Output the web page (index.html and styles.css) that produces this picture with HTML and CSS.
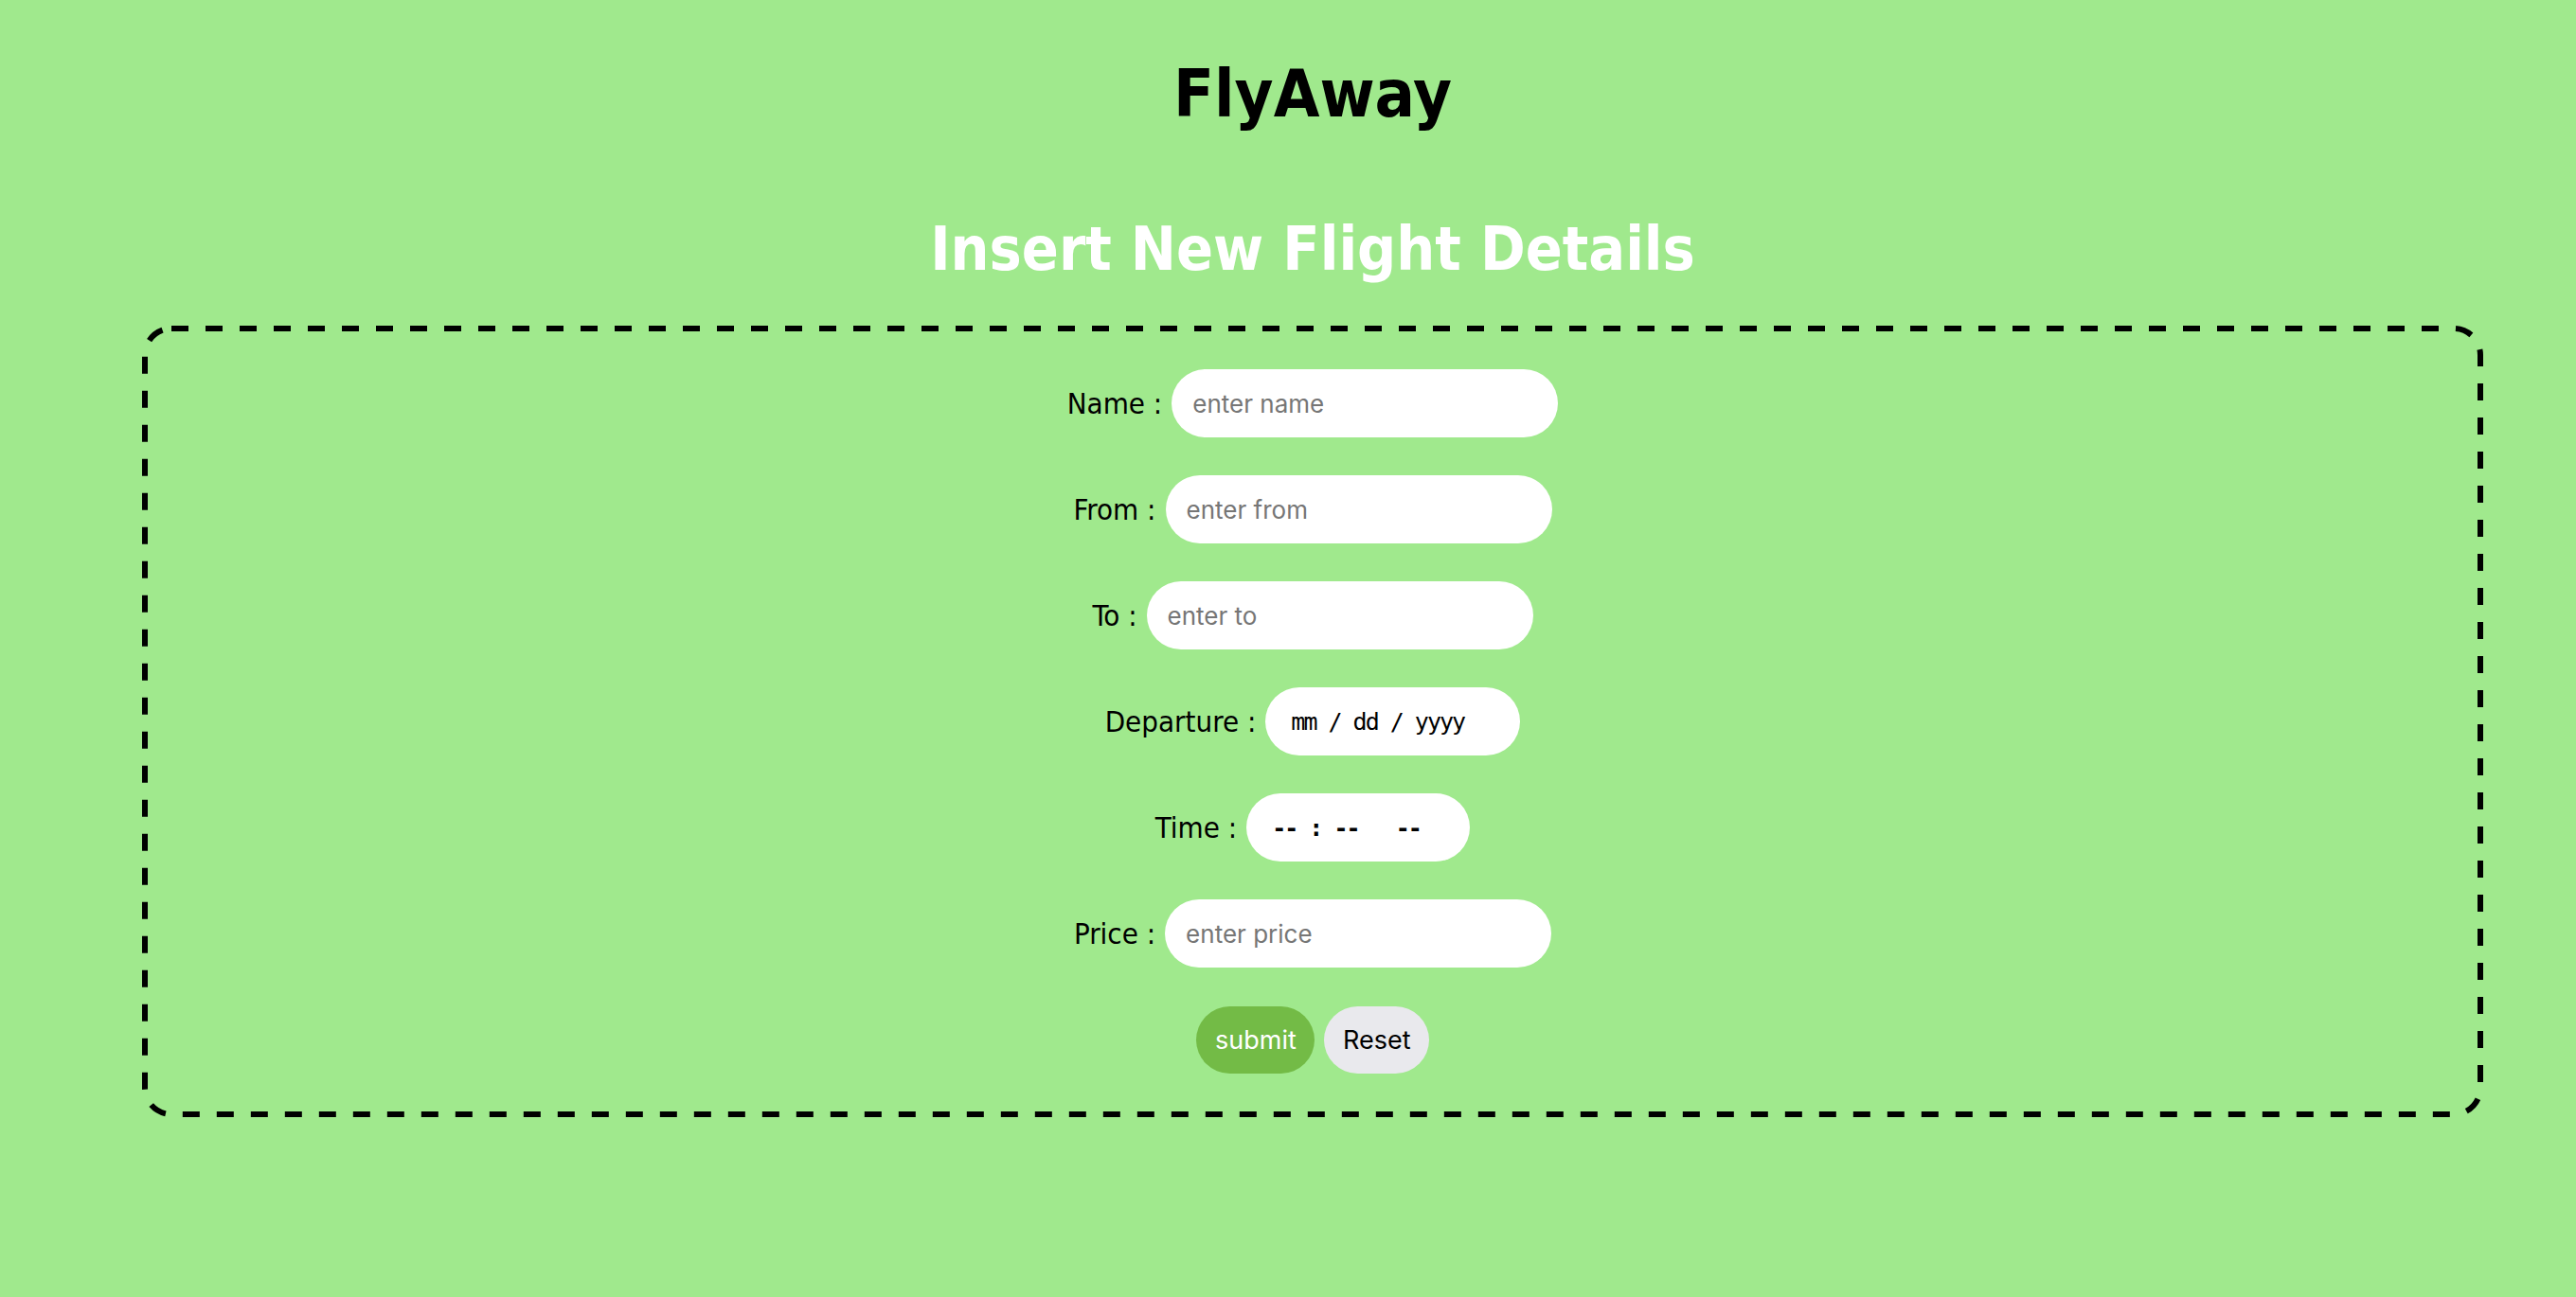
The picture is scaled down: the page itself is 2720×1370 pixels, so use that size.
FILE: index.html
```html
<!DOCTYPE html>
<html lang="en">
<head>
<meta charset="utf-8">
<title>FlyAway</title>
<link rel="stylesheet" href="styles.css">
</head>
<body>
<main class="page">
  <h1 class="brand">FlyAway</h1>
  <h2 class="heading">Insert New Flight Details</h2>
  <form class="flight-form">
    <div class="row">
      <label class="label" for="name">Name :</label>
      <input class="field field-wide" id="name" type="text" placeholder="enter name">
    </div>
    <div class="row">
      <label class="label" for="from">From :</label>
      <input class="field field-wide" id="from" type="text" placeholder="enter from">
    </div>
    <div class="row">
      <label class="label" for="to">To :</label>
      <input class="field field-wide" id="to" type="text" placeholder="enter to">
    </div>
    <div class="row">
      <label class="label" for="dep">Departure :</label>
      <input class="field field-mono field-date" id="dep" type="text" placeholder="mm / dd / yyyy">
    </div>
    <div class="row">
      <label class="label" for="time">Time :</label>
      <input class="field field-mono field-time" id="time" type="text" placeholder="-- : --   --">
    </div>
    <div class="row">
      <label class="label" for="price">Price :</label>
      <input class="field field-wide" id="price" type="text" placeholder="enter price">
    </div>
    <div class="row row-buttons">
      <button class="btn btn-submit" type="submit">submit</button>
      <button class="btn btn-reset" type="reset">Reset</button>
    </div>
  </form>
</main>
</body>
</html>
```

FILE: styles.css
```css
html, body {
  margin: 0;
  padding: 0;
  background: #a0e98d;
}

body {
  font-family: "DejaVu Sans Condensed", "DejaVu Sans", sans-serif;
  font-stretch: condensed;
  min-height: 1370px;
}

.page {
  margin-left: 150px;
  width: 2472px;
  padding-top: 64px;
}

.brand {
  margin: 0;
  font-size: 70px;
  line-height: 1;
  font-weight: bold;
  color: #000;
  text-align: center;
}

.heading {
  margin: 96px 0 47px;
  font-size: 64px;
  line-height: 67px;
  font-weight: bold;
  color: #fff;
  text-align: center;
}

.flight-form {
  box-sizing: border-box;
  width: 2472px;
  height: 836px;
  border: none;
  background: url("data:image/svg+xml,%3Csvg xmlns='http://www.w3.org/2000/svg' width='2472' height='836'%3E%3Crect x='3' y='3' width='2466' height='830' rx='28' ry='28' fill='none' stroke='black' stroke-width='6' stroke-dasharray='18 18'/%3E%3C/svg%3E") no-repeat 0 0;
  padding: 46px 0;
  display: flex;
  flex-direction: column;
  gap: 40px;
}

.row {
  display: flex;
  justify-content: center;
  align-items: center;
  height: 72px;
  gap: 10px;
}

.label {
  font-size: 31px;
  color: #000;
}

.field {
  box-sizing: border-box;
  height: 72px;
  border: none;
  outline: none;
  border-radius: 36px;
  background: #fff;
  padding: 0 22px;
  font-family: Inter, "Noto Sans", sans-serif;
  font-size: 26px;
  color: #000;
}

.field::placeholder {
  color: #767676;
}

.field-wide {
  width: 408px;
}

.field-mono {
  font-family: "DejaVu Sans Mono", monospace;
  font-size: 25px;
  letter-spacing: -2px;
  padding-left: 27px;
}

.field-mono::placeholder {
  color: #000;
}

.field-date {
  width: 269px;
}

.field-time {
  width: 236px;
  font-weight: bold;
}

.row-buttons {
  gap: 10px;
}

.btn {
  box-sizing: border-box;
  height: 71px;
  border: none;
  border-radius: 36px;
  font-family: Inter, "Noto Sans", sans-serif;
  font-size: 27px;
  padding: 0 20px;
}

.btn-submit {
  width: 125px;
  background: #73bb46;
  color: #fff;
}

.btn-reset {
  width: 111px;
  background: #e9e9ed;
  color: #000;
}
```
